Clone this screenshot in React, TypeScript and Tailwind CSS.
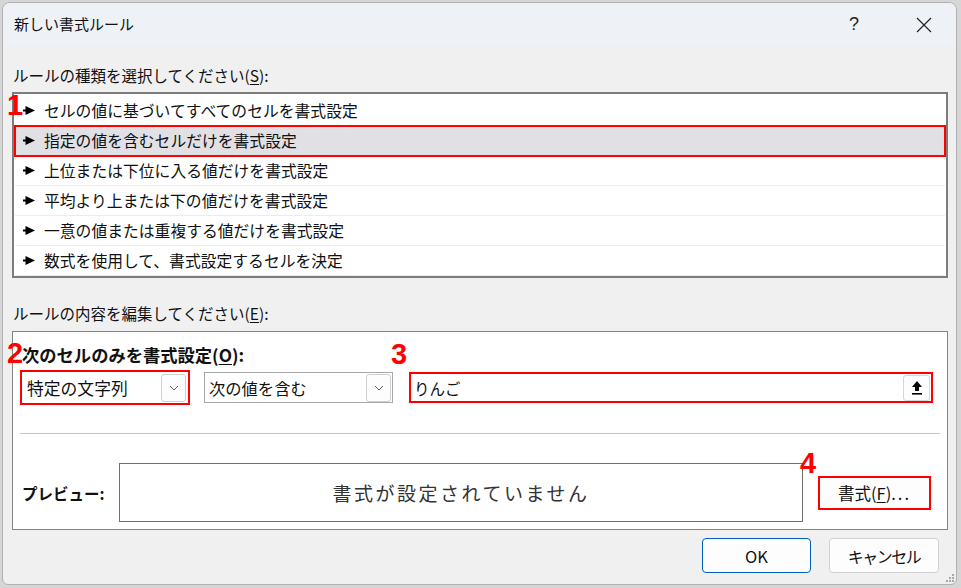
import React from "react";

const FONT = { fontFamily: '"Noto Sans CJK JP", "Noto Sans", sans-serif' };

const RULE_TYPES = [
  "セルの値に基づいてすべてのセルを書式設定",
  "指定の値を含むセルだけを書式設定",
  "上位または下位に入る値だけを書式設定",
  "平均より上または下の値だけを書式設定",
  "一意の値または重複する値だけを書式設定",
  "数式を使用して、書式設定するセルを決定",
];

function Pointer() {
  return (
    <svg width="12" height="9" viewBox="0 0 12 9" className="shrink-0">
      <rect x="0" y="3.5" width="4" height="2" fill="#000" />
      <polygon points="2.5,0 12,4.5 2.5,9" fill="#000" />
    </svg>
  );
}

function Chevron() {
  return (
    <svg width="10" height="6" viewBox="0 0 10 6">
      <polyline points="1,1 5,5 9,1" fill="none" stroke="#606060" strokeWidth="1" />
    </svg>
  );
}

function Marker({ n, className }: { n: string; className: string }) {
  return (
    <span
      className={`absolute text-[29px] font-bold leading-none text-[#ff0000] ${className}`}
      style={{ fontFamily: '"Liberation Sans", Arial, sans-serif' }}
    >
      {n}
    </span>
  );
}

export default function App() {
  return (
    <div className="relative h-[588px] w-[961px] overflow-hidden bg-[#d6d6d6]" style={FONT}>
      <div className="ml-[2px] mt-[2px] flex h-[583px] w-[955px] flex-col overflow-hidden rounded-t-lg rounded-b-md border border-[#b0b0b0] bg-[#f0f0f0] text-[#111]">
        {/* title bar */}
        <div className="flex h-[42px] shrink-0 items-center bg-[#eef2f7] pl-[11px]">
          <span className="text-[15px] leading-[20px]">新しい書式ルール</span>
          <span className="ml-auto text-[18px] leading-none text-[#222]" style={{ fontFamily: '"Liberation Sans", sans-serif' }}>
            ?
          </span>
          <svg width="16" height="16" viewBox="0 0 16 16" className="ml-[57px] mr-[24px] mt-[1px]">
            <path d="M1 1 L15 15 M15 1 L1 15" stroke="#222" strokeWidth="1.2" />
          </svg>
        </div>

        <div className="relative flex flex-1 flex-col pl-[9px] pr-[8px]">
          <div className="mt-[20px] pl-[1px] text-[15.5px] leading-[20px]">
            ルールの種類を選択してください(<span className="underline underline-offset-2">S</span>):
          </div>

          {/* rule type list */}
          <div className="mt-[7px] h-[186px] border-2 border-[#7d7d7d] bg-white pt-[2px]">
            {RULE_TYPES.map((label, i) => (
              <div
                key={label}
                className={`mx-[1px] flex h-[30px] items-center gap-[9px] border-b border-[#ececec] pl-[8px] text-[15.8px] leading-[20px] ${
                  i === 1 ? "bg-[#e1e0e5] outline-2 -outline-offset-1 outline-[#ff0000]" : ""
                }`}
              >
                <Pointer />
                <span>{label}</span>
              </div>
            ))}
          </div>
          <Marker n="1" className="left-[4px] top-[46px]" />

          <div className="mt-[25px] pl-[1px] text-[15.5px] leading-[20px]">
            ルールの内容を編集してください(<span className="underline underline-offset-2">E</span>):
          </div>

          {/* rule description panel */}
          <div className="mt-[8px] border border-[#858585] bg-white pb-[7px]">
            <div className="mt-[13px] pl-[9px] text-[17.3px] font-bold leading-[20px]">
              次のセルのみを書式設定(<span className="underline underline-offset-2">O</span>):
            </div>

            <div className="mt-[5px] flex h-[35px] items-center">
              <div className="ml-[7px] flex h-[35px] w-[170px] items-center justify-between border-2 border-[#ff0000] pl-[5px] pr-[2px]">
                <span className="text-[16.8px] leading-[20px]">特定の文字列</span>
                <div className="flex h-[28px] w-[25px] items-center justify-center rounded-[3px] border border-[#cfcfcf] bg-[#fdfdfd]">
                  <Chevron />
                </div>
              </div>
              <div className="ml-[14px] flex h-[31px] w-[189px] items-center justify-between border border-[#a8a8a8] pl-[4px] pr-[1px]">
                <span className="text-[16.3px] leading-[20px]">次の値を含む</span>
                <div className="flex h-[28px] w-[25px] items-center justify-center rounded-[3px] border border-[#cfcfcf] bg-[#fdfdfd]">
                  <Chevron />
                </div>
              </div>
              <div className="ml-[16px] flex h-[31px] w-[524px] items-center justify-between border-2 border-[#ff0000] pl-[3px] pr-[1px]">
                <span className="text-[15.5px] leading-[20px]">りんご</span>
                <div className="flex h-[26px] w-[27px] items-center justify-center rounded-[3px] border border-[#d6d6d6] bg-[#fdfdfd]">
                  <svg width="12" height="15" viewBox="0 0 12 15">
                    <polygon points="6,1 11,7 8,7 8,11 4,11 4,7 1,7" fill="#000" />
                    <rect x="1" y="13" width="10" height="1.6" fill="#000" />
                  </svg>
                </div>
              </div>
            </div>

            <div className="mx-[7px] mt-[28px] h-px bg-[#c4c4c4]" />

            <div className="mt-[29px] flex h-[59px] items-center">
              <span className="ml-[9px] w-[97px] text-[15.5px] font-bold leading-[20px]">プレビュー:</span>
              <div className="flex h-[59px] w-[684px] items-center justify-center border border-[#707070] bg-white">
                <span className="text-[19px] leading-[24px] tracking-[2.5px] text-[#333]">
                  書式が設定されていません
                </span>
              </div>
              <button
                type="button"
                className="ml-[15px] flex h-[34px] w-[113px] items-center justify-center border-2 border-[#ff0000] bg-[#fdfdfd] text-[16.5px] leading-[20px]"
              >
                書式(<span className="underline underline-offset-2">F</span>)<span className="tracking-[2px]">...</span>
              </button>
            </div>
          </div>
          <Marker n="2" className="left-[4px] top-[294px]" />
          <Marker n="3" className="left-[388px] top-[295px]" />
          <Marker n="4" className="left-[797px] top-[404px]" />

          {/* footer buttons */}
          <div className="mt-[8px] flex justify-end gap-[18px] pr-[9px]">
            <button
              type="button"
              className="h-[35px] w-[109px] rounded-[4px] border border-[#005fb8] bg-[#fdfdfd] text-[16.5px] leading-[20px]"
            >
              OK
            </button>
            <button
              type="button"
              className="h-[35px] w-[110px] rounded-[4px] border border-[#d0d0d0] bg-[#fdfdfd] text-[16px] leading-[20px] tracking-[-1.5px]"
            >
              キャンセル
            </button>
          </div>

          <svg width="10" height="10" viewBox="0 0 10 10" className="absolute bottom-[1px] right-[1px]">
            <rect x="7" y="1" width="2" height="2" fill="#a8a8a8" />
            <rect x="4" y="4" width="2" height="2" fill="#a8a8a8" />
            <rect x="7" y="4" width="2" height="2" fill="#a8a8a8" />
            <rect x="1" y="7" width="2" height="2" fill="#a8a8a8" />
            <rect x="4" y="7" width="2" height="2" fill="#a8a8a8" />
            <rect x="7" y="7" width="2" height="2" fill="#a8a8a8" />
          </svg>
        </div>
      </div>
    </div>
  );
}
